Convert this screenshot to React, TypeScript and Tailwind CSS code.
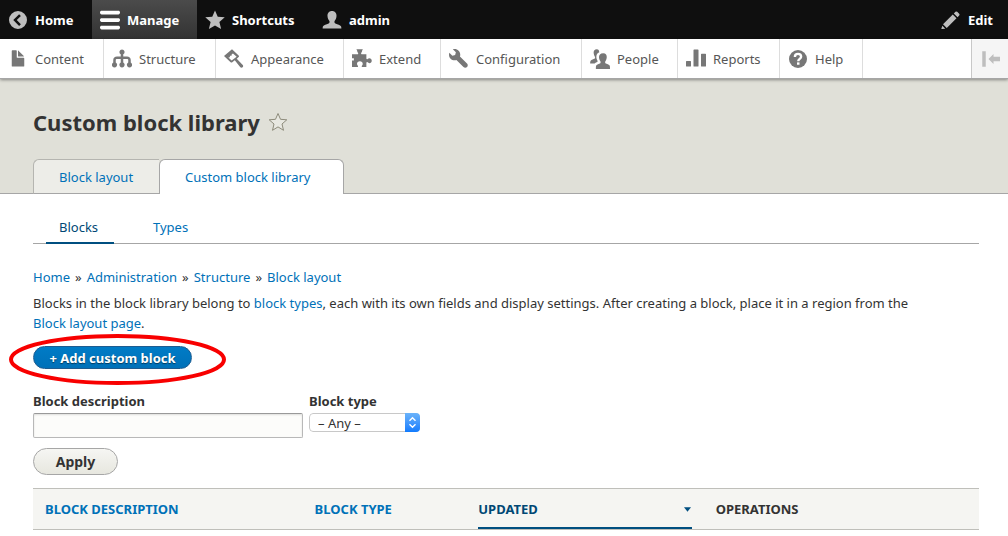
import type { ReactNode } from 'react';

const homePath =
  'M8 .8a7.2 7.2 0 1 0 0 14.4A7.2 7.2 0 0 0 8 .8zm2.3 10.5L8.9 12.700 4.2 8l4.700-4.700 1.400 1.400L7 8z';
const hamburgerPath =
  'M14.75 6.5H1.25C.56 6.5 0 7.06 0 7.75v.5c0 .69.56 1.25 1.25 1.25h13.5c.69 0 1.25-.56 1.25-1.25v-.5c0-.69-.56-1.25-1.25-1.25zM14.75.5H1.25C.56.5 0 1.06 0 1.75v.5c0 .69.56 1.25 1.25 1.25h13.5c.69 0 1.25-.56 1.25-1.25v-.5c0-.69-.56-1.25-1.25-1.25zM14.75 12.5H1.25C.56 12.5 0 13.06 0 13.75v.5c0 .69.56 1.25 1.25 1.25h13.5c.69 0 1.25-.56 1.25-1.25v-.5c0-.69-.56-1.25-1.25-1.25z';
const starPath = 'M8 .3l2.200 5.100 5.600.4-4.300 3.800 1.400 5.600L8 12.300l-4.900 2.900 1.400-5.600L.2 5.800l5.600-.4z';
const personPath =
  'M8 .8c-2.4 0-3.7 1.7-3.6 4 .1 1.5.6 2.9 1.4 3.8.5.7.3 1.7-.5 2.1-1.9.8-3.8 1.1-4.5 2.3-.2.4-.3 1.2-.3 1.7h15c0-.5-.1-1.3-.3-1.7-.7-1.2-2.6-1.5-4.5-2.3-.8-.4-1-1.4-.5-2.1.8-.9 1.3-2.3 1.4-3.8.1-2.3-1.2-4-3.6-4z';
const pencilPath =
  'M14.545 3.042l-1.586-1.585a1 1 0 0 0-1.414 0l-1.293 1.293 3 3 1.293-1.293a1 1 0 0 0 0-1.415zM9.4 3.6l3 3-7.8 7.800-3-3zM1.100 12.600l2.300 2.300-2.600.3c-.4 0-.6-.2-.5-.5z';
const filePath =
  'M12.502 7h-5c-.276 0-.502-.225-.502-.5v-5c0-.275-.225-.5-.5-.5h-3c-.275 0-.5.225-.5.5v12.029c0 .275.225.5.5.5h9.002c.275 0 .5-.225.5-.5v-6.029c0-.275-.225-.5-.5-.5zM8.502 6h4c.275 0 .34-.159.146-.354l-4.293-4.292c-.195-.195-.353-.129-.353.146v4c0 .275.225.5.5.5z';
const orgPath =
  'M8 .3a2.100 2.100 0 0 0-1 3.900V6H4C2.200 6 1 7.100 1 8.700v2.100a2.100 2.100 0 1 0 2 0V8.700c0-.4.400-.7 1-.7h3v2.800a2.100 2.100 0 1 0 2 0V8h3c.6 0 1 .3 1 .7v2.100a2.100 2.100 0 1 0 2 0V8.700C15 7.100 13.800 6 12 6H9V4.200A2.100 2.100 0 0 0 8 .3z';
const wrenchPath =
  'M14.416 11.586l-.01-.008v-.001l-5.656-5.656c.15-.449.252-.921.252-1.421 0-2.485-2.016-4.5-4.502-4.5-.505 0-.981.102-1.434.255l2.431 2.431-.588 2.196-2.196.588-2.445-2.445c-.162.464-.268.956-.268 1.475 0 2.486 2.014 4.5 4.5 4.5.5 0 .972-.102 1.421-.251l5.665 5.665c.781.781 2.047.781 2.828 0 .39-.391.586-.902.586-1.413 0-.513-.195-1.025-.584-1.415z';
const brushPath =
  'M6.400.2L0 5.600l5.300 4.900c.4.4.9.400 1.300.1l2-1.600 4.300 5.400c.6.700 1.400.700 2 .2s.600-1.400-.1-2L10.200 7.700l1.500-1.300c.4-.3.4-.8 0-1.200zM6.100 9.200L3.500 6.800l1.200-.3.100-1.200 1.200 0 .2-1.200 1-.5 2.900 2.500z';
const puzzlePath =
  'M0 4.2h4.3c.6 0 .8-.5.6-1-.3-.5-.7-.8-.7-1.400C4.200.9 3.200.2 3.600.2h5c.4 0-.6.7-.6 1.600 0 .6-.4.9-.7 1.400-.2.5.1 1 .7 1h3.500v3.300c0 .6.5.8 1 .5.4-.3.8-.7 1.4-.7 1.1 0 1.900.9 1.900 2s-.8 2-1.900 2c-.6 0-1-.4-1.400-.7-.5-.3-1-.1-1 .5v3.300H8.400c-.6 0-.8-.4-.5-1 .3-.4.7-.9.7-1.500 0-1.200-1-2.100-2.300-2.100S4 10.700 4 11.900c0 .6.4 1.100.7 1.500.3.6.1 1-.5 1H0V9.200h1.500V7.300H0z';
const peoplePath =
  'M5.900 9.100c-.6-1-.9-2.200-.8-3.400.1-1.500.9-2.700 2.300-3.200C7.300 1.100 6.800.2 5.500.2 3.700.2 2.800 1.500 2.900 3.200c.1 1.200.5 2.200 1 2.900.4.600.2 1.400-.4 1.700C2.100 8.400.9 8.700.4 9.600c-.2.4-.3 1-.3 1.900h3.600c.7-.6 1.400-.9 2.100-1.200.3-.2.4-.8.1-1.200zM10.600 3.400c-2.400 0-3.500 1.400-3.400 3.200.1 1.300.5 2.400 1.100 3.100.4.600.2 1.600-.4 1.900-1.500.7-2.500.8-2.900 1.600-.3.400-.300 1.800-.300 2.700H16c0-.9 0-2.300-.3-2.700-.4-.8-1.500-.9-3-1.600-.6-.3-.8-1.300-.4-1.900.6-.7 1-1.800 1.100-3.100.1-1.800-.7-3.200-2.800-3.200z';
const barsPath =
  'M.5 9.500h3c.3 0 .5.2.5.5v3.500c0 .3-.2.5-.5.500h-3a.5.5 0 0 1-.5-.5V10c0-.3.2-.5.5-.5zM6.500.3h3c.3 0 .5.2.5.5v12.700c0 .3-.2.5-.5.500h-3a.5.5 0 0 1-.5-.5V.8c0-.3.2-.5.5-.5zM12.500 3.700h3c.3 0 .5.2.5.5v9.300c0 .3-.2.5-.5.500h-3a.5.5 0 0 1-.5-.5V4.200c0-.3.2-.5.5-.5z';

function Icon({ path, className }: { path: string; className?: string }) {
  return (
    <svg viewBox="0 0 16 16" fill="currentColor" fillRule="evenodd" aria-hidden="true" className={`size-5 shrink-0 ${className ?? ''}`}>
      <path d={path} />
    </svg>
  );
}

function HelpIcon() {
  return (
    <svg viewBox="0 0 16 16" aria-hidden="true" className="size-5 shrink-0">
      <circle cx="8" cy="8" r="7.2" fill="#777" />
      <path d="M5.500 6.300C5.500 4.700 6.500 3.900 8 3.900s2.500.9 2.500 2.200c0 1.700-2.300 1.800-2.300 3.600" fill="none" stroke="#fff" strokeWidth="1.900" />
      <rect x="7.2" y="10.700" width="2" height="1.900" fill="#fff" />
    </svg>
  );
}

const trayItems: { label: string; icon: ReactNode; width: string }[] = [
  { label: 'Content', icon: <Icon path={filePath} />, width: 'w-[104px]' },
  { label: 'Structure', icon: <Icon path={orgPath} />, width: 'w-28' },
  { label: 'Appearance', icon: <Icon path={brushPath} />, width: 'w-32' },
  { label: 'Extend', icon: <Icon path={puzzlePath} />, width: 'w-[97px]' },
  { label: 'Configuration', icon: <Icon path={wrenchPath} />, width: 'w-[141px]' },
  { label: 'People', icon: <Icon path={peoplePath} />, width: 'w-24' },
  { label: 'Reports', icon: <Icon path={barsPath} />, width: 'w-[102px]' },
  { label: 'Help', icon: <HelpIcon />, width: 'w-[83px]' },
];

const barLink = 'flex h-full items-center gap-[7px] text-white';
const link = 'text-[#0071b8]';

export default function App() {
  return (
    <div className="min-h-screen bg-white font-['Noto_Sans',sans-serif] text-[13px] leading-5 text-[#333]">
      <nav aria-label="Toolbar" className="flex h-[39px] items-center bg-[#0f0f0f] text-[13px] font-bold">
        <a href="#home" className={`${barLink} w-23 px-2`}>
          <Icon path={homePath} className="text-[#bebebe]" />
          Home
        </a>
        <a href="#manage" className={`${barLink} w-[105px] bg-linear-to-b from-[#4b4b4b] to-[#333] px-2`}>
          <Icon path={hamburgerPath} />
          Manage
        </a>
        <a href="#shortcuts" className={`${barLink} w-[117px] px-2`}>
          <Icon path={starPath} className="text-[#bebebe]" />
          Shortcuts
        </a>
        <a href="#admin" className={`${barLink} px-2`}>
          <Icon path={personPath} className="text-[#bebebe]" />
          admin
        </a>
        <button type="button" className={`${barLink} ml-auto pr-[15px] pl-2`}>
          <Icon path={pencilPath} className="text-[#bebebe]" />
          Edit
        </button>
      </nav>

      <nav
        aria-label="Administration"
        className="relative flex h-10 border-b border-[#a6a6a6] bg-white text-[#565656] shadow-[0_1px_3px_rgba(0,0,0,0.4)]"
      >
        {trayItems.map((item) => (
          <a
            key={item.label}
            href={`#${item.label.toLowerCase()}`}
            className={`flex items-center gap-[7px] border-r border-[#ddd] pl-2 ${item.width}`}
          >
            <span className="text-[#777]">{item.icon}</span>
            {item.label}
          </a>
        ))}
        <button
          type="button"
          aria-label="Vertical orientation"
          className="ml-auto flex w-[37px] items-center justify-center border-l border-[#c8c8c8] bg-[#f5f5f5] text-[#bebebe]"
        >
          <Icon path="M1.800 1.800h2.800v12.400H1.800zM6.800 8l4-4v2.200h5.200v3.600h-5.200V12z" />
        </button>
      </nav>

      <header className="border-b border-[#a6a6a6] bg-[#e0e0d8] pr-[29px] pl-[33px] pt-[27px]">
        <div className="flex items-center gap-2">
          <h1 className="text-[22px] leading-8 font-bold">Custom block library</h1>
          <button type="button" aria-label="Add to shortcuts">
            <svg viewBox="0 0 20 20" className="size-5 fill-[#e8e8e1] stroke-[#8d8b7b]" aria-hidden="true">
              <path d="M10 1.500l2.500 5.800 6.300.5-4.800 4.200 1.500 6.300-5.500-3.400-5.500 3.400L6 12 1.200 7.800l6.300-.5z" />
            </svg>
          </button>
        </div>
        <nav aria-label="Primary tabs" className="mt-[21px] -mb-px flex items-end">
          <a href="#layout" className={`${link} flex h-[35px] w-[126px] items-center rounded-tl-md border border-r-0 border-[#b5b5b0] border-b-[#a6a6a6] bg-[#edede8] pl-[25px]`}>
            Block layout
          </a>
          <a href="#library" className={`${link} flex h-[35px] w-[185px] items-center rounded-t-md border border-b-0 border-[#a6a6a6] bg-white pl-[25px]`}>
            Custom block library
          </a>
        </nav>
      </header>

      <main className="pr-[29px] pl-[33px]">
        <nav aria-label="Secondary tabs" className="mt-4 flex border-b border-[#a6a6a6] pl-[13px]">
          <a href="#blocks" className="-mb-px h-[34px] w-[68px] border-b-2 border-[#004f80] pt-[7px] pl-[13px] text-[#004875]">
            Blocks
          </a>
          <a href="#types" className={`${link} ml-[26px] pt-[7px] pl-[13px]`}>
            Types
          </a>
        </nav>

        <nav aria-label="Breadcrumb" className="mt-[23px] flex gap-[5px]">
          <a href="#home" className={link}>Home</a>»
          <a href="#administration" className={link}>Administration</a>»
          <a href="#structure" className={link}>Structure</a>»
          <a href="#layout" className={link}>Block layout</a>
        </nav>

        <p className="mt-1.5">
          Blocks in the block library belong to <a href="#types" className={link}>block types</a>, each with its own fields and
          display settings. After creating a block, place it in a region from the{' '}
          <a href="#layout" className={`${link} inline-block`}>Block layout page</a>.
        </p>

        <div className="relative mt-[13px] w-fit">
          <a
            href="#add"
            className="flex h-[23px] w-[159px] items-center justify-center rounded-full border border-[#1e5c90] bg-linear-to-b from-[#007bc6] to-[#0071b8] font-bold text-white [text-shadow:0_1px_1px_rgba(0,0,0,0.5)]"
          >
            + Add custom block
          </a>
          <svg viewBox="0 0 218 52" fill="none" aria-hidden="true" className="pointer-events-none absolute -top-3 -left-6 h-[52px] w-[218px] max-w-none">
            <ellipse cx="108.500" cy="25.500" rx="106.500" ry="23.500" stroke="#f80000" strokeWidth="4" />
          </svg>
        </div>

        <form className="mt-[22px]">
          <div className="flex gap-1.5">
            <div>
              <label htmlFor="description" className="block font-bold">Block description</label>
              <input
                id="description"
                type="text"
                className="mt-0.5 block h-[25px] w-[270px] rounded-xs border border-[#b8b8b8] border-t-[#999] bg-[#fcfcfa] px-2 shadow-[inset_0_1px_2px_rgba(0,0,0,0.12)]"
              />
            </div>
            <div>
              <label htmlFor="type" className="block font-bold">Block type</label>
              <div className="relative mt-0.5 w-[111px] overflow-hidden rounded-sm">
                <select
                  id="type"
                  className="block h-[19px] w-full appearance-none rounded-sm border border-[#c8c8c8] bg-white pl-2 leading-4"
                >
                  <option>– Any –</option>
                </select>
                <svg viewBox="0 0 15 19" fill="none" aria-hidden="true" className="pointer-events-none absolute top-0 right-0 h-[19px] w-[15px] bg-linear-to-b from-[#6ab3fa] to-[#0f7bfd]">
                  <path d="M4.500 7.800l3-3 3 3M4.500 11.200l3 3 3-3" stroke="#fff" strokeWidth="1.400" />
                </svg>
              </div>
            </div>
          </div>
          <button
            type="button"
            className="mt-2.5 block h-[27px] w-[85px] rounded-full border border-[#a6a6a6] bg-linear-to-b from-[#f6f6f3] to-[#e7e7df] text-sm leading-5 font-bold"
          >
            Apply
          </button>
        </form>

        <table className="mt-[13px] w-full table-fixed border-collapse text-left text-[13px] uppercase">
          <thead>
            <tr className="h-[41px] border-y border-[#bfbfba] bg-[#f5f5f2]">
              <th scope="col" className="w-[28.5%] px-3 py-0">
                <a href="#description" className={link}>Block description</a>
              </th>
              <th scope="col" className="w-[17.3%] px-3 py-0">
                <a href="#type" className={link}>Block type</a>
              </th>
              <th scope="col" aria-sort="descending" className="w-[25.1%] px-3 py-0">
                <a href="#updated" className="flex h-10 items-center justify-between border-y-2 border-t-transparent border-b-[#004f80] text-[#004875]">
                  Updated
                  <svg viewBox="0 0 9 6" aria-hidden="true" className="mr-px h-[5px] w-[7px] fill-[#004f80]">
                    <path d="M0 0h9L4.500 6z" />
                  </svg>
                </a>
              </th>
              <th scope="col" className="px-3 py-0">Operations</th>
            </tr>
          </thead>
        </table>
      </main>
    </div>
  );
}
